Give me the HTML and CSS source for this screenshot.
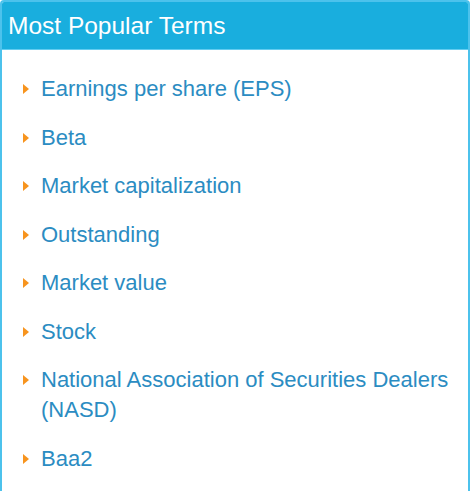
FILE: index.html
```html
<!DOCTYPE html>
<html>
<head>
<meta charset="utf-8">
<link rel="stylesheet" href="styles.css">
</head>
<body>
<div class="panel">
  <div class="panel-header">Most Popular Terms</div>
  <ul class="terms">
    <li class="term"><a href="#">Earnings per share (EPS)</a></li>
    <li class="term"><a href="#">Beta</a></li>
    <li class="term"><a href="#">Market capitalization</a></li>
    <li class="term"><a href="#">Outstanding</a></li>
    <li class="term"><a href="#">Market value</a></li>
    <li class="term"><a href="#">Stock</a></li>
    <li class="term"><a href="#">National Association of Securities Dealers (NASD)</a></li>
    <li class="term"><a href="#">Baa2</a></li>
  </ul>
</div>
</body>
</html>
```
FILE: styles.css
```css
html, body {
  margin: 0;
  padding: 0;
  background: #ffffff;
}
body {
  font-family: "Liberation Sans", Arial, sans-serif;
}
.panel {
  width: 466px;
  height: 491px;
  overflow: hidden;
  border: 2px solid #4cc2ec;
  border-bottom: none;
  border-radius: 4px 4px 0 0;
  box-sizing: content-box;
}
.panel-header {
  background: #19aede;
  color: #ffffff;
  font-size: 24.5px;
  line-height: 46px;
  height: 46px;
  padding: 3px 0 0 8px;
  margin: -2px -2px 0 -2px;
  border-radius: 4px 4px 0 0;
  border-bottom: 1px solid #62ccf0;
}
.terms {
  list-style: none;
  margin: 0;
  padding: 24px 0 0 39px;
}
.term {
  position: relative;
  font-size: 22px;
  line-height: 30px;
  margin-bottom: 18.5px;
}
.term::before {
  content: "";
  position: absolute;
  left: -18px;
  top: 10px;
  width: 0;
  height: 0;
  border-left: 6px solid #f7941e;
  border-top: 5px solid transparent;
  border-bottom: 5px solid transparent;
}
.term a {
  color: #2b8cc2;
  text-decoration: none;
}
```
